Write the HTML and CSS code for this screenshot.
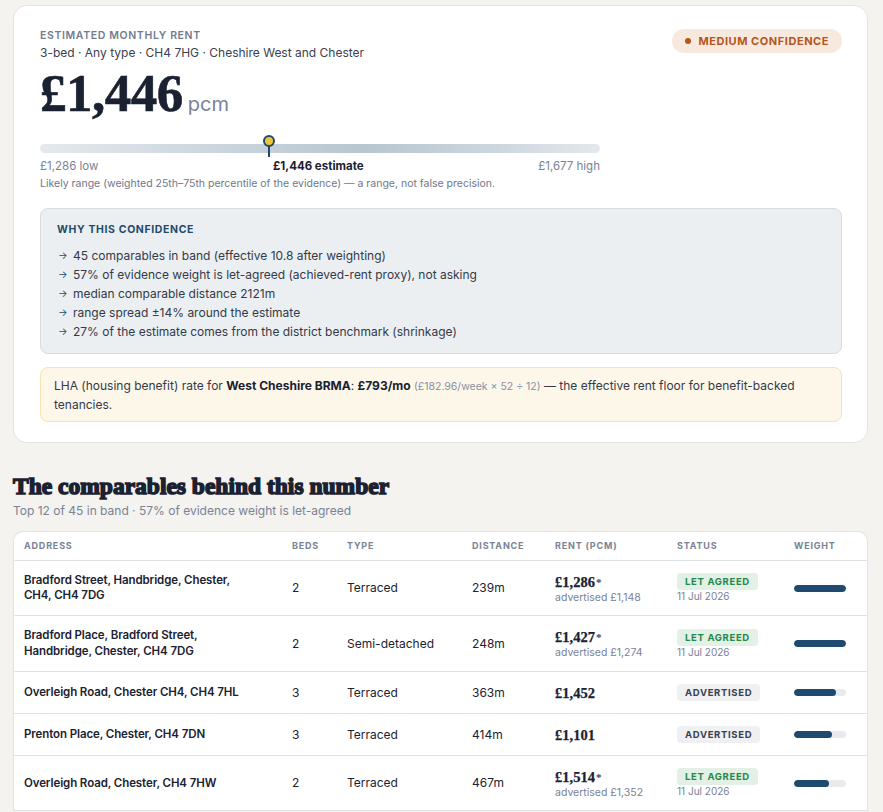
FILE: index.html
```html
<!DOCTYPE html>
<html lang="en">
<head>
<meta charset="utf-8">
<title>Estimated monthly rent</title>
<link rel="stylesheet" href="styles.css">
</head>
<body>
<div class="page">
  <section class="card">
    <div class="head">
      <div>
        <div class="eyebrow">ESTIMATED MONTHLY RENT</div>
        <div class="sub">3-bed · Any type · CH4 7HG · Cheshire West and Chester</div>
      </div>
      <div class="badge"><span class="dot"></span>MEDIUM CONFIDENCE</div>
    </div>
    <div class="price"><span class="amount">£1,446</span><span class="pcm">pcm</span></div>

    <div class="range">
      <div class="bar">
        <div class="marker" style="left:40.9%"><span class="pin"></span><span class="stem"></span></div>
      </div>
      <div class="range-labels">
        <span>£1,286 low</span>
        <span class="est">£1,446 estimate</span>
        <span>£1,677 high</span>
      </div>
      <div class="caption">Likely range (weighted 25th–75th percentile of the evidence) — a range, not false precision.</div>
    </div>

    <div class="why">
      <div class="why-title">WHY THIS CONFIDENCE</div>
      <ul>
        <li><span class="arr">→</span>45 comparables in band (effective 10.8 after weighting)</li>
        <li><span class="arr">→</span>57% of evidence weight is let-agreed (achieved-rent proxy), not asking</li>
        <li><span class="arr">→</span>median comparable distance 2121m</li>
        <li><span class="arr">→</span>range spread ±14% around the estimate</li>
        <li><span class="arr">→</span>27% of the estimate comes from the district benchmark (shrinkage)</li>
      </ul>
    </div>

    <div class="lha">LHA (housing benefit) rate for <b>West Cheshire BRMA</b>: <b>£793/mo</b> <span class="muted">(£182.96/week × 52 ÷ 12)</span> — the effective rent floor for benefit-backed tenancies.</div>
  </section>

  <h2 class="section-title">The comparables behind this number</h2>
  <div class="section-sub">Top 12 of 45 in band · 57% of evidence weight is let-agreed</div>

  <div class="table-card">
    <table>
      <colgroup>
        <col class="c1"><col class="c2"><col class="c3"><col class="c4"><col class="c5"><col class="c6"><col class="c7">
      </colgroup>
      <thead>
        <tr><th>ADDRESS</th><th>BEDS</th><th>TYPE</th><th>DISTANCE</th><th>RENT (PCM)</th><th>STATUS</th><th>WEIGHT</th></tr>
      </thead>
      <tbody>
        <tr>
          <td class="addr">Bradford Street, Handbridge, Chester, CH4, CH4 7DG</td>
          <td>2</td><td>Terraced</td><td>239m</td>
          <td><div class="rent">£1,286<span class="ast">*</span></div><div class="adv">advertised £1,148</div></td>
          <td><span class="pill let">LET AGREED</span><div class="date">11 Jul 2026</div></td>
          <td><div class="w"><div class="wf" style="width:100%"></div></div></td>
        </tr>
        <tr>
          <td class="addr">Bradford Place, Bradford Street, Handbridge, Chester, CH4 7DG</td>
          <td>2</td><td>Semi-detached</td><td>248m</td>
          <td><div class="rent">£1,427<span class="ast">*</span></div><div class="adv">advertised £1,274</div></td>
          <td><span class="pill let">LET AGREED</span><div class="date">11 Jul 2026</div></td>
          <td><div class="w"><div class="wf" style="width:100%"></div></div></td>
        </tr>
        <tr>
          <td class="addr">Overleigh Road, Chester CH4, CH4 7HL</td>
          <td>3</td><td>Terraced</td><td>363m</td>
          <td><div class="rent">£1,452</div></td>
          <td><span class="pill adv-pill">ADVERTISED</span></td>
          <td><div class="w"><div class="wf" style="width:81%"></div></div></td>
        </tr>
        <tr>
          <td class="addr">Prenton Place, Chester, CH4 7DN</td>
          <td>3</td><td>Terraced</td><td>414m</td>
          <td><div class="rent">£1,101</div></td>
          <td><span class="pill adv-pill">ADVERTISED</span></td>
          <td><div class="w"><div class="wf" style="width:73%"></div></div></td>
        </tr>
        <tr>
          <td class="addr">Overleigh Road, Chester, CH4 7HW</td>
          <td>2</td><td>Terraced</td><td>467m</td>
          <td><div class="rent">£1,514<span class="ast">*</span></div><div class="adv">advertised £1,352</div></td>
          <td><span class="pill let">LET AGREED</span><div class="date">11 Jul 2026</div></td>
          <td><div class="w"><div class="wf" style="width:67%"></div></div></td>
        </tr>
      </tbody>
    </table>
  </div>
</div>
</body>
</html>
```

FILE: styles.css
```css
* { box-sizing: border-box; }
html, body { margin: 0; padding: 0; }
body {
  background: #f4f3ef;
  font-family: Inter, "Liberation Sans", sans-serif;
  color: #1c2230;
}
.page { padding: 5px 15px 0 13px; }

.card {
  background: #fff;
  border: 1px solid #e6e4df;
  border-radius: 14px;
  padding: 22px 25px 20px 26px;
}
.head { display: flex; justify-content: space-between; align-items: flex-start; }
.eyebrow {
  font-size: 10.5px; font-weight: 600; letter-spacing: 0.06em; color: #737b8e;
  line-height: 14px; margin-top: 1px;
}
.sub { font-size: 12px; color: #3a4150; line-height: 18px; margin-top: 1px; }
.badge {
  margin-top: 1px;
  background: #f8e9df; color: #b5561c;
  font-size: 11px; font-weight: 700; letter-spacing: 0.05em;
  height: 24px; line-height: 24px; padding: 0 13px 0 13px; border-radius: 12px;
  display: flex; align-items: center; gap: 7px;
}
.dot { width: 6px; height: 6px; border-radius: 50%; background: #b5561c; display: inline-block; }

.price { display: flex; align-items: baseline; gap: 5px; margin-top: 1px; height: 60px; }
.amount {
  font-family: "Liberation Serif", serif; font-weight: 700; font-size: 53px;
  color: #1a2131; letter-spacing: -0.5px; line-height: 60px;
  -webkit-text-stroke: 0.6px #1a2131;
}
.pcm { font-size: 20px; color: #7a8296; }

.range { width: 560px; margin-top: 21px; }
.bar {
  position: relative; height: 9px; border-radius: 5px;
  background: linear-gradient(90deg, #e5e9ed 0%, #cdd6de 30%, #b8c6d0 58%, #cbd5dd 80%, #e4e8ec 100%);
  margin-top: 6px;
}
.marker { position: absolute; top: -9px; width: 12px; margin-left: -6px; display: flex; flex-direction: column; align-items: center; }
.pin { width: 12px; height: 12px; border-radius: 50%; background: #f1c33c; border: 2px solid #1d4a6e; }
.stem { width: 2px; height: 11px; background: #1d4a6e; margin-top: -1px; }
.range-labels {
  display: flex; justify-content: space-between; margin-top: 6px;
  font-size: 11.5px; color: #7a8296; line-height: 14px;
}
.range-labels .est { color: #1a2131; font-weight: 700; }
.caption { font-size: 10.5px; color: #6f7789; margin-top: 4px; line-height: 14px; }

.why {
  margin-top: 17px;
  background: #eceff2; border: 1px solid #d5dce2; border-radius: 8px;
  padding: 14px 16px 12px 16px;
}
.why-title { font-size: 10.5px; font-weight: 700; letter-spacing: 0.06em; color: #1f4a6b; line-height: 14px; }
.why ul { list-style: none; margin: 9px 0 0; padding: 0; }
.why li { font-size: 12px; line-height: 19px; color: #333a48; display: flex; }
.arr { color: #1f4a6b; font-size: 10px; width: 16px; flex: none; padding-left: 1px; }

.lha {
  margin-top: 13px;
  background: #fdf7ea; border: 1px solid #f4e3b6; border-radius: 8px;
  padding: 7.5px 14px 7.5px 13px;
  font-size: 12px; line-height: 19px; color: #333a48;
}
.lha b { color: #1a2131; font-weight: 700; }
.lha .muted { color: #8a90a0; font-size: 10.5px; line-height: 14px; }

.section-title {
  font-family: "Liberation Serif", serif; font-weight: 700; font-size: 23.5px;
  -webkit-text-stroke: 1.5px #1a2131; color: #1a2131;
  margin: 29px 0 0; line-height: 28px; letter-spacing: 0;
}
.section-sub { font-size: 12px; color: #7a8296; margin-top: 3px; line-height: 16px; }

.table-card {
  margin-top: 12px; background: #fff; border: 1px solid #e2e3e6;
  border-radius: 10px 10px 0 0; border-bottom: none; overflow: hidden;
}
table { width: 100%; border-collapse: collapse; table-layout: fixed; }
col.c1 { width: 268px; } col.c2 { width: 55px; } col.c3 { width: 125px; } col.c4 { width: 83px; }
col.c5 { width: 122px; } col.c6 { width: 117px; } col.c7 { width: auto; }
th {
  text-align: left; font-size: 9px; font-weight: 700; letter-spacing: 0.09em; color: #7a8296;
  padding: 0 10px; height: 28px; border-bottom: 1px solid #dfe1e5;
}
td {
  font-size: 12px; color: #1c2230; padding: 12px 10px 11px; vertical-align: middle;
  border-bottom: 1px solid #dfe1e5; line-height: 16px;
}
td.addr { font-weight: 600; font-size: 11.5px; letter-spacing: -0.1px; padding-right: 22px; line-height: 15.5px; }
.rent {
  font-family: "Liberation Serif", serif; font-weight: 700; font-size: 14.5px; color: #1a2131;
  line-height: 18px; -webkit-text-stroke: 0.25px #1a2131;
}
.ast { font-size: 11px; color: #1f4a6b; margin-left: 1px; position: relative; top: -1px; -webkit-text-stroke: 0; }
.adv { font-size: 10.5px; color: #7a8296; line-height: 12.5px; }
.pill {
  display: inline-block; font-size: 9.5px; font-weight: 700; letter-spacing: 0.07em;
  height: 17px; line-height: 17px; padding: 0 8px; border-radius: 4px; vertical-align: top;
}
.pill.let { background: #e2f0e6; color: #25884a; }
.pill.adv-pill { background: #eef0f2; color: #3a4150; }
.date { font-size: 10px; color: #7a8296; line-height: 13px; margin-top: 0; }
.w { width: 52px; height: 7px; border-radius: 4px; background: #e8eaee; overflow: hidden; }
.wf { height: 100%; background: #1d4a6e; border-radius: 4px; }
```
